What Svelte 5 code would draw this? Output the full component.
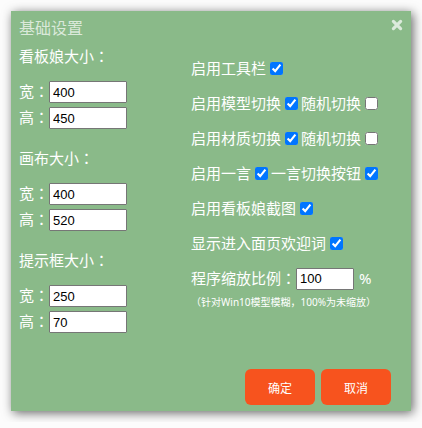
<script>
  let sizes = $state([
    { id: 'figure', title: '看板娘大小', width: '400', height: '450' },
    { id: 'canvas', title: '画布大小', width: '400', height: '520' },
    { id: 'tips', title: '提示框大小', width: '250', height: '70' }
  ]);

  let switches = $state([
    [{ id: 'toolbar', label: '启用工具栏', on: true }],
    [
      { id: 'model', label: '启用模型切换', on: true },
      { id: 'model-random', label: '随机切换', on: false }
    ],
    [
      { id: 'texture', label: '启用材质切换', on: true },
      { id: 'texture-random', label: '随机切换', on: false }
    ],
    [
      { id: 'hitokoto', label: '启用一言', on: true },
      { id: 'hitokoto-button', label: '一言切换按钮', on: true }
    ],
    [{ id: 'capture', label: '启用看板娘截图', on: true }],
    [{ id: 'welcome', label: '显示进入面页欢迎词', on: true }]
  ]);

  let scale = $state('100');
</script>

<form class="dialog" onsubmit={(e) => e.preventDefault()}>
  <header>
    <h1>基础设置</h1>
    <button type="button" class="close" aria-label="关闭">
      <svg viewBox="0 0 12 12" width="12" height="12" aria-hidden="true">
        <path d="M2.4 2.4 9.6 9.6M9.6 2.4 2.4 9.6" fill="none" stroke="currentColor" stroke-width="3.2" stroke-linecap="round" />
      </svg>
    </button>
  </header>

  <div class="columns">
    <div class="sizes">
      {#each sizes as size (size.id)}
        <section>
          <h2>{size.title}<span class="colon">：</span></h2>
          <div class="field">
            <label for="{size.id}-w">宽<span class="colon">：</span></label>
            <input id="{size.id}-w" type="text" bind:value={size.width} />
          </div>
          <div class="field">
            <label for="{size.id}-h">高<span class="colon">：</span></label>
            <input id="{size.id}-h" type="text" bind:value={size.height} />
          </div>
        </section>
      {/each}
    </div>

    <div class="options">
      {#each switches as row}
        <div class="row">
          {#each row as item (item.id)}
            <label for={item.id}>{item.label}</label>
            <input id={item.id} type="checkbox" bind:checked={item.on} />
          {/each}
        </div>
      {/each}
      <div class="row scale">
        <label for="scale">程序缩放比例<span class="colon">：</span></label>
        <input id="scale" type="text" bind:value={scale} />
        <span class="unit">%</span>
      </div>
      <p>（针对Win10模型模糊，100%为未缩放）</p>
    </div>
  </div>

  <footer>
    <button type="submit">确定</button>
    <button type="button">取消</button>
  </footer>
</form>

<style>
  :global(body) {
    background: #fcfcfc;
  }

  .dialog {
    display: flex;
    flex-direction: column;
    box-sizing: border-box;
    min-height: 400px;
    margin: 11px;
    padding: 6px 8px;
    background: #8aba89;
    box-shadow: 2px 2px 10px #666;
    color: #fff;
    font: 15px/20px "Noto Sans", "Noto Sans CJK SC", sans-serif;
  }

  .colon {
    font-family: "Noto Sans CJK TC", sans-serif;
  }

  header {
    display: flex;
    justify-content: space-between;
    height: 22px;
    color: rgba(255, 255, 255, 0.7);
  }

  h1 {
    margin: 0;
    font-size: 16px;
    font-weight: 400;
    line-height: 22px;
  }

  .close {
    align-self: flex-start;
    display: flex;
    padding: 2px 0;
    border: 0;
    background: none;
    color: inherit;
  }

  .columns {
    display: flex;
  }

  .sizes {
    flex: 0 0 172px;
    padding-top: 7px;
  }

  section {
    margin-bottom: 17px;
  }

  h2 {
    margin: 0 0 13px;
    font-size: 15px;
    font-weight: 400;
    line-height: 20px;
  }

  label,
  .unit {
    padding-bottom: 2px;
  }

  .field {
    display: flex;
    align-items: center;
    height: 26px;
  }

  .field input {
    width: 78px;
  }

  input[type="text"] {
    box-sizing: border-box;
    height: 22px;
    margin: 0;
    padding: 0 3px;
    border: 1px solid #767676;
    border-radius: 1px;
    background: #fff;
    color: #000;
    font: 13px "Liberation Sans", sans-serif;
  }

  .options {
    flex: 1;
    padding-top: 12px;
    white-space: nowrap;
  }

  .row {
    display: flex;
    align-items: center;
    height: 35px;
  }

  input[type="checkbox"] {
    width: 13px;
    height: 13px;
    margin: 0 3px 0 4px;
  }

  .scale input {
    width: 58px;
  }

  .unit {
    margin-left: 5px;
  }

  p {
    margin: 0;
    font-size: 10px;
    line-height: 12px;
  }

  footer {
    display: flex;
    justify-content: flex-end;
    gap: 6px;
    margin-top: auto;
    padding-right: 12px;
  }

  footer button {
    width: 70px;
    height: 36px;
    padding: 0;
    border: 0;
    border-radius: 6px;
    background: #f7531e;
    color: #fff;
    font: 12px "Noto Sans CJK SC", sans-serif;
  }
</style>
